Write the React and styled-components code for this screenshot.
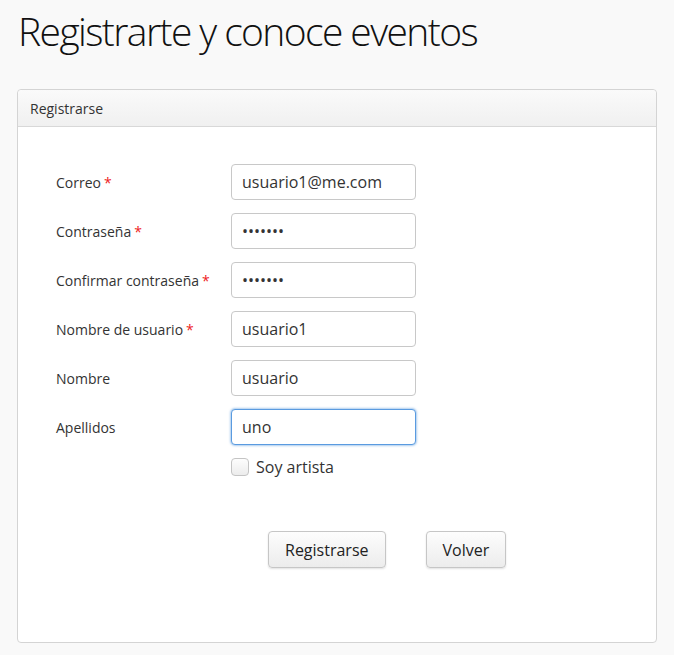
import styled, { createGlobalStyle } from "styled-components";

const GlobalStyle = createGlobalStyle`
  html, body {
    margin: 0;
    background: #f9f9f9;
    font-family: "Open Sans", "Liberation Sans", sans-serif;
    color: #333;
  }
`;

const Page = styled.div`
  padding: 3px 17px 0 17px;
  width: 640px;
`;

const Title = styled.h1`
  margin: 0 0 30px 1px;
  font-weight: 300;
  font-size: 39px;
  line-height: 56px;
  color: #111;
  letter-spacing: -1.6px;
`;

const Panel = styled.section`
  background: #fff;
  border: 1px solid #d4d4d4;
  border-radius: 4px;
  height: 554px;
  box-sizing: border-box;
`;

const PanelHeader = styled.div`
  height: 37px;
  box-sizing: border-box;
  padding: 0 12px;
  display: flex;
  align-items: center;
  font-size: 14px;
  color: #333;
  background: linear-gradient(#fafafa, #f0f0f0);
  border-bottom: 1px solid #d8d8d8;
  border-radius: 4px 4px 0 0;
`;

const Form = styled.form`
  padding: 37px 0 0 38px;
  display: flex;
  flex-direction: column;
  gap: 13px;
`;

const Row = styled.div`
  display: grid;
  grid-template-columns: 175px 185px;
  align-items: center;
`;

const Label = styled.label`
  font-size: 14px;
  color: #333;
`;

const Req = styled.span`
  color: #e22;
  margin-left: 3px;
`;

const Input = styled.input`
  box-sizing: border-box;
  width: 185px;
  height: 36px;
  padding: 0 10px;
  font-family: "Open Sans", "Liberation Sans", sans-serif;
  font-size: 16px;
  color: #333;
  border: 1px solid ${(p) => (p.$focused ? "#5a9be0" : "#c8c8c8")};
  border-radius: 4px;
  box-shadow: ${(p) => (p.$focused ? "0 0 2px 1px rgba(90,155,224,0.5)" : "none")};
  outline: none;
  background: #fff;
`;

const CheckRow = styled.div`
  display: flex;
  align-items: center;
  gap: 7px;
  margin: -2px 0 0 175px;
  font-size: 16px;
  color: #333;
`;

const Box = styled.span`
  width: 18px;
  height: 18px;
  box-sizing: border-box;
  border: 1px solid #c4c4c4;
  border-radius: 4px;
  background: linear-gradient(#fdfdfd, #ececec);
`;

const Actions = styled.div`
  display: flex;
  gap: 40px;
  margin: 40px 0 0 212px;
`;

const Button = styled.button`
  height: 37px;
  padding: 0 16px;
  font-family: "Open Sans", "Liberation Sans", sans-serif;
  font-size: 16px;
  color: #222;
  background: linear-gradient(#fdfdfd, #ececec);
  border: 1px solid #c6c6c6;
  border-radius: 4px;
  box-shadow: 0 1px 2px rgba(0, 0, 0, 0.12);
`;

const fields = [
  { label: "Correo", value: "usuario1@me.com", req: true },
  { label: "Contraseña", req: true, pwd: true },
  { label: "Confirmar contraseña", req: true, pwd: true },
  { label: "Nombre de usuario", value: "usuario1", req: true },
  { label: "Nombre", value: "usuario" },
  { label: "Apellidos", value: "uno", focused: true },
];

export default function App() {
  return (
    <>
      <GlobalStyle />
      <Page>
        <Title>Registrarte y conoce eventos</Title>
        <Panel>
          <PanelHeader>Registrarse</PanelHeader>
          <Form>
            {fields.map((f) => (
              <Row key={f.label}>
                <Label>
                  {f.label}
                  {f.req && <Req>*</Req>}
                </Label>
                <Input
                  type={f.pwd ? "password" : "text"}
                  defaultValue={f.pwd ? "1234567" : f.value}
                  $focused={f.focused}
                  readOnly
                />
              </Row>
            ))}
            <CheckRow>
              <Box />
              Soy artista
            </CheckRow>
            <Actions>
              <Button type="button">Registrarse</Button>
              <Button type="button">Volver</Button>
            </Actions>
          </Form>
        </Panel>
      </Page>
    </>
  );
}
